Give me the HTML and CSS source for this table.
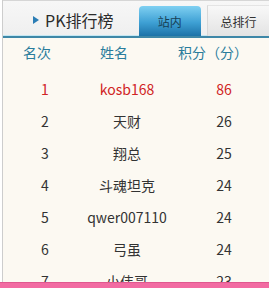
FILE: index.html
```html
<!DOCTYPE html>
<html lang="zh-CN">
<head>
<meta charset="utf-8">
<link rel="stylesheet" href="styles.css">
</head>
<body>
<div class="panel">
  <div class="head">
    <div class="title"><span class="tri"></span>PK排行榜</div>
    <div class="tab active">站内</div>
    <div class="tab">总排行</div>
  </div>
  <div class="table">
    <div class="row th">
      <div class="c1">名次</div>
      <div class="c2">姓名</div>
      <div class="c3">积分（分）</div>
    </div>
    <div class="rows">
      <div class="row top"><div>1</div><div>kosb168</div><div>86</div></div>
      <div class="row"><div>2</div><div>天财</div><div>26</div></div>
      <div class="row"><div>3</div><div>翔总</div><div>25</div></div>
      <div class="row"><div>4</div><div>斗魂坦克</div><div>24</div></div>
      <div class="row"><div>5</div><div>qwer007110</div><div>24</div></div>
      <div class="row"><div>6</div><div>弓虽</div><div>24</div></div>
      <div class="row"><div>7</div><div>小伟哥</div><div>23</div></div>
    </div>
  </div>
</div>
<div class="bar"></div>
</body>
</html>
```
FILE: styles.css
```css
html, body {
  margin: 0;
  padding: 0;
  background: #ffffff;
}
body {
  width: 269px;
  height: 288px;
  overflow: hidden;
  font-family: "Noto Sans CJK SC", "DejaVu Sans", sans-serif;
  color: #333;
}
.panel {
  margin-left: 2px;
  height: 282px;
  border-left: 1px solid #cdcdcd;
  background: #fcf9f2;
  overflow: hidden;
}
.head {
  height: 35px;
  border-top: 1px solid #d6d6d6;
  background: linear-gradient(#f7f7f7, #efefef);
  display: flex;
  align-items: flex-end;
  border-bottom: 2px solid #3e87a7;
  box-shadow: inset 0 -1px 0 #c4e7f3;
  position: relative;
}
.title {
  width: 139px;
  align-self: stretch;
  display: flex;
  align-items: center;
  padding-left: 30px;
  box-sizing: border-box;
  font-size: 16px;
  color: #2b2b2b;
  line-height: 1;
  padding-top: 2px;
}
.tri {
  width: 0;
  height: 0;
  border-top: 4px solid transparent;
  border-bottom: 4px solid transparent;
  border-left: 6px solid #2b7db5;
  margin-right: 6px;
}
.tab {
  height: 30px;
  margin-bottom: 0;
  display: flex;
  align-items: center;
  justify-content: center;
  font-size: 12px;
  box-sizing: border-box;
  position: relative;
  z-index: 1;
}
.tab.active {
  width: 64px;
  border-radius: 4px 4px 0 0;
  background: linear-gradient(#7fd0f2, #3ea0d4 55%, #1c72a8);
  color: #183f55;
}
.tab:not(.active) {
  margin-left: 6px;
  width: 64px;
  border-left: 1px solid #d8d8d8;
  border-top: 1px solid #e4e4e4;
  background: linear-gradient(#f8f8f8, #e3e3e3);
  color: #333;
  height: 31px;
}
.table {
  font-size: 14px;
}
.row {
  display: grid;
  grid-template-columns: 84px 80px 114px;
  height: 32px;
  align-items: center;
  text-align: center;
  line-height: 1;
}
.row.th {
  height: 28px;
  text-align: left;
  color: #2a7c9c;
  margin-bottom: 7px;
}
.th .c1 { padding-left: 20px; }
.th .c2 { padding-left: 13px; }
.th .c3 { padding-left: 11px; }
.row.top {
  color: #d02424;
}
.bar {
  height: 5px;
  border-top: 1px solid #e0588f;
  background: #f26ba2;
}
```
